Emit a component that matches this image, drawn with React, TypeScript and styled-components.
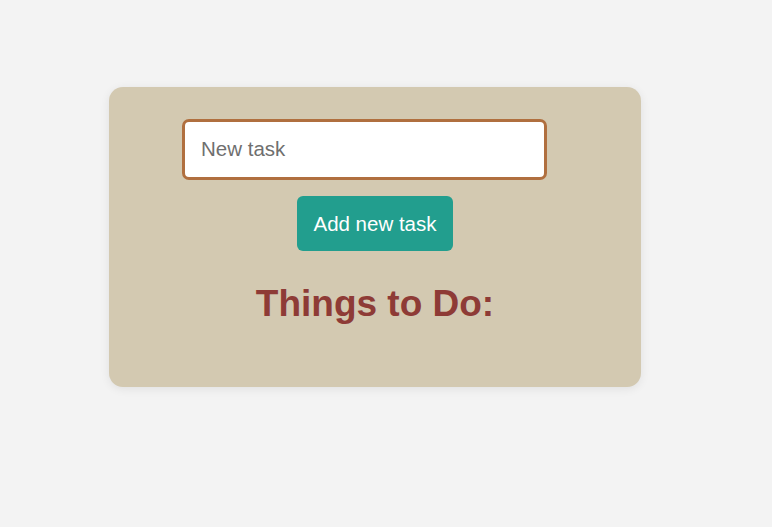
import React, { useState } from 'react';
import styled, { createGlobalStyle } from 'styled-components';

const GlobalStyle = createGlobalStyle`
  html, body {
    margin: 0;
    padding: 0;
    background: #f3f3f3;
    font-family: "Liberation Sans", Arial, sans-serif;
  }
`;

const Page = styled.div`
  min-height: 527px;
  padding: 87px 0 0 109px;
  box-sizing: border-box;
`;

const Card = styled.div`
  width: 532px;
  height: 300px;
  box-sizing: border-box;
  background: #d3c9b1;
  border-radius: 14px;
  box-shadow: 0 2px 10px rgba(0, 0, 0, 0.08);
  padding: 32px 0 0;
  display: flex;
  flex-direction: column;
  align-items: center;
`;

const TaskInput = styled.input`
  width: 365px;
  height: 61px;
  box-sizing: border-box;
  margin-right: 21px;
  padding: 0 0 2px 16px;
  border: 3px solid #b06f3f;
  border-radius: 7px;
  background: #fff;
  font-family: inherit;
  font-size: 20.5px;
  color: #333;
  outline: none;

  &::placeholder {
    color: #6f6f6f;
  }
`;

const AddButton = styled.button`
  margin-top: 16px;
  height: 55px;
  padding: 0 16px;
  border: none;
  border-radius: 6px;
  background: #229e8e;
  color: #fff;
  font-family: inherit;
  font-size: 20.5px;
  cursor: pointer;
`;

const Heading = styled.h1`
  margin: 32px 0 0;
  font-size: 37px;
  font-weight: bold;
  color: #8e3b36;
`;

const TaskList = styled.ul`
  margin: 0;
  padding: 0;
  list-style: none;
`;

export default function App() {
  const [task, setTask] = useState('');
  const [tasks, setTasks] = useState<string[]>([]);

  const addTask = () => {
    if (!task.trim()) return;
    setTasks([...tasks, task.trim()]);
    setTask('');
  };

  return (
    <>
      <GlobalStyle />
      <Page>
        <Card>
          <TaskInput
            placeholder="New task"
            value={task}
            onChange={e => setTask(e.target.value)}
          />
          <AddButton onClick={addTask}>Add new task</AddButton>
          <Heading>Things to Do:</Heading>
          <TaskList>
            {tasks.map((t, i) => (
              <li key={i}>{t}</li>
            ))}
          </TaskList>
        </Card>
      </Page>
    </>
  );
}
